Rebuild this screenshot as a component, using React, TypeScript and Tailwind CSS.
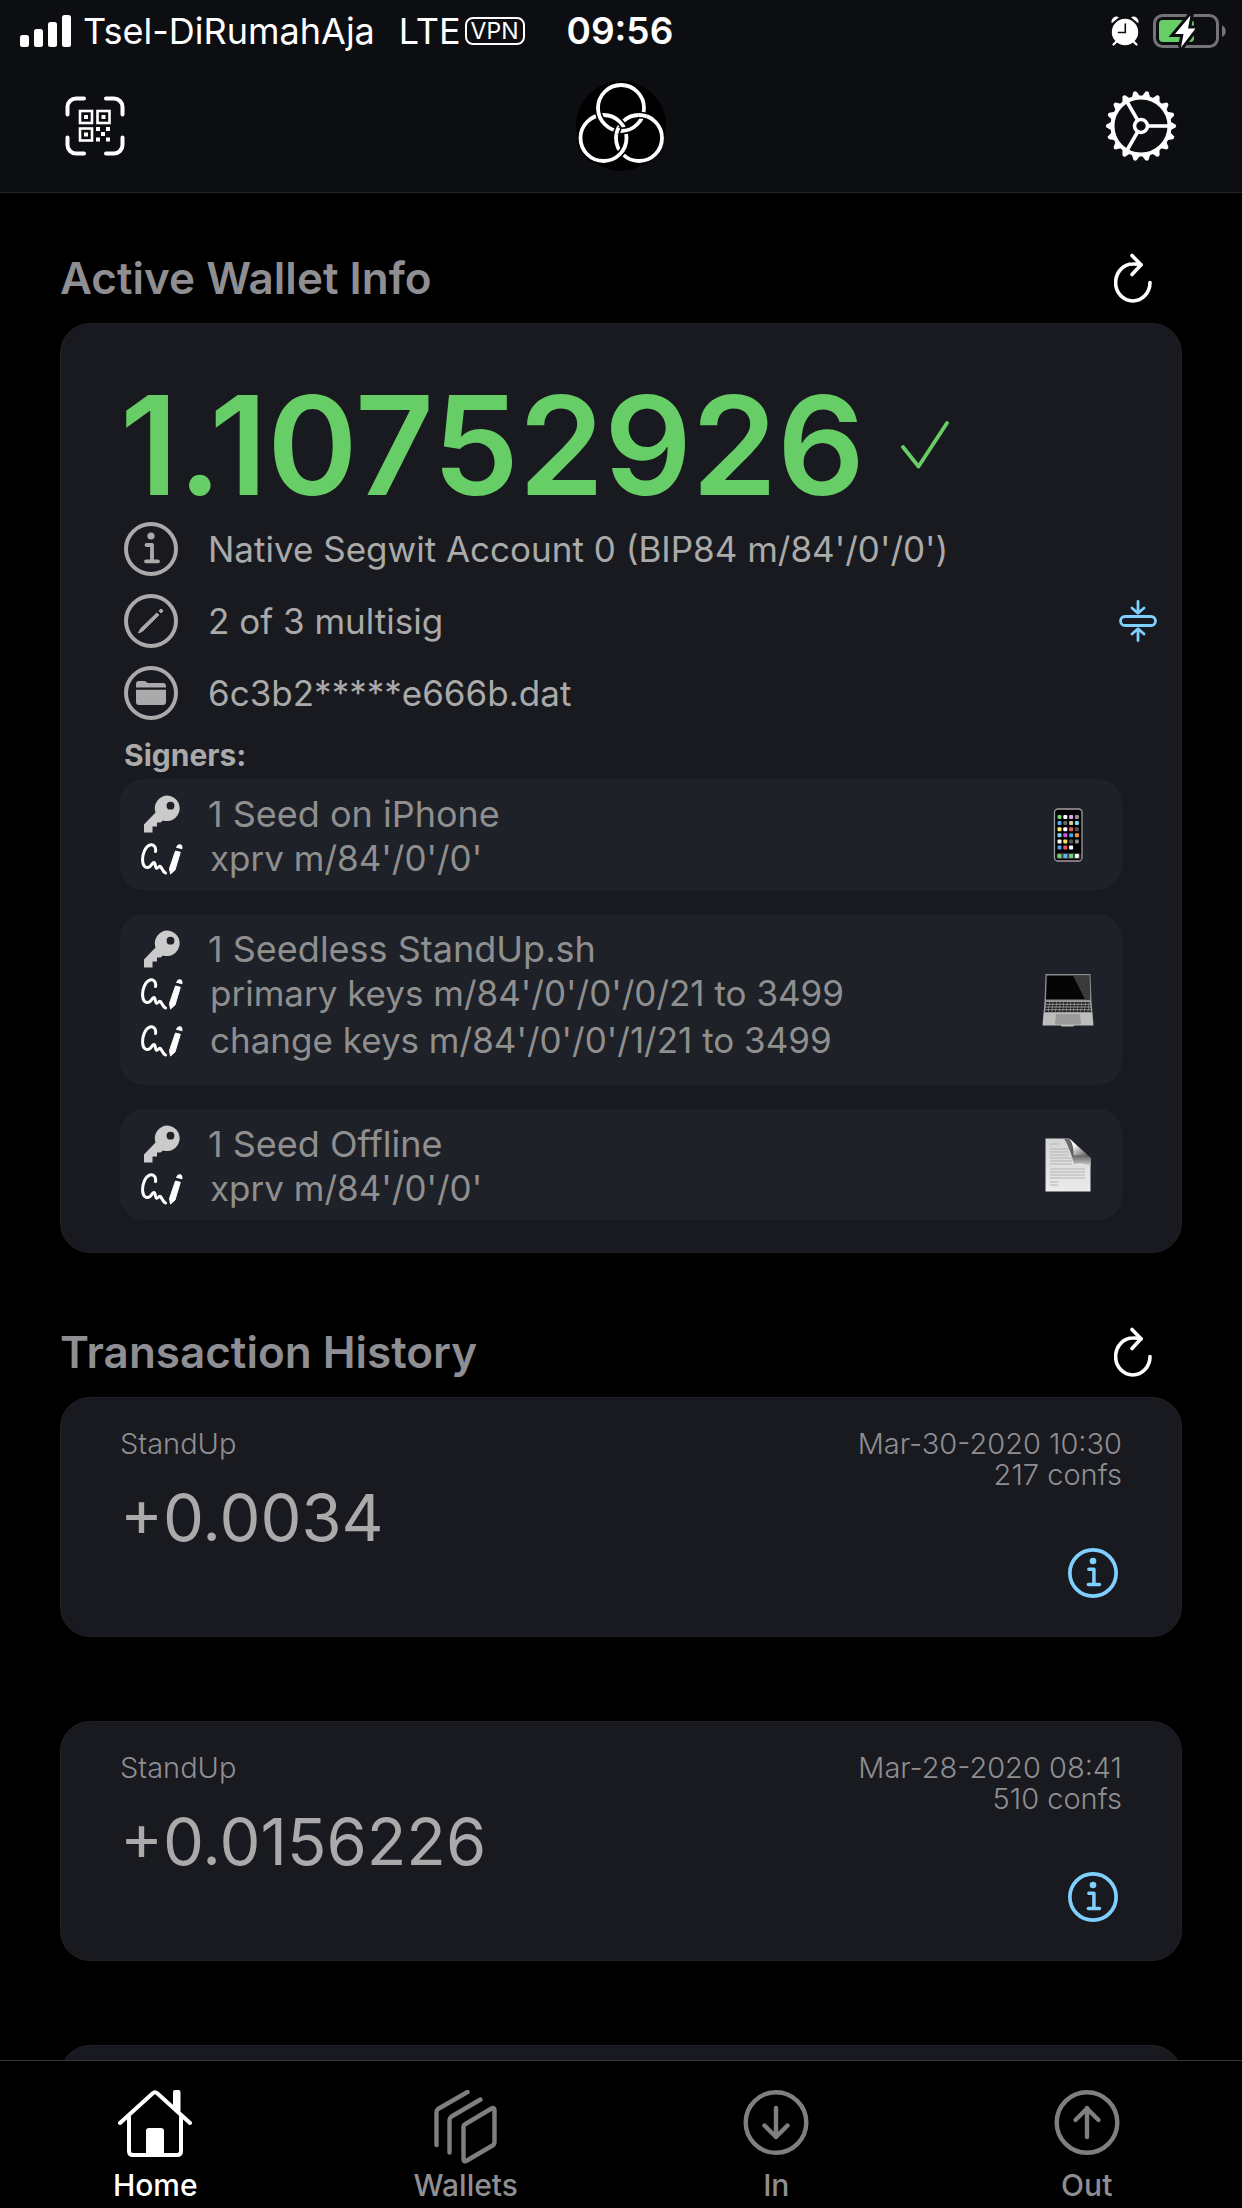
import React from "react";

type IconProps = { className?: string };

const range = (n: number) => Array.from({ length: n }, (_, i) => i);

const polar = (cx: number, cy: number, r: number, deg: number) => {
  const a = (deg * Math.PI) / 180;
  return `${(cx + r * Math.cos(a)).toFixed(2)} ${(cy + r * Math.sin(a)).toFixed(2)}`;
};

const arc = (cx: number, cy: number, r: number, from: number, to: number) =>
  `M${polar(cx, cy, r, from)}A${r} ${r} 0 0 1 ${polar(cx, cy, r, to)}`;

function SignalIcon() {
  return (
    <svg className="h-8 w-[51px]" viewBox="0 0 51 32" fill="#fff" aria-hidden="true">
      <rect x="0" y="20" width="9" height="12" rx="2.5" />
      <rect x="14" y="14" width="9" height="18" rx="2.5" />
      <rect x="28" y="7" width="9" height="25" rx="2.5" />
      <rect x="42" y="0" width="9" height="32" rx="2.5" />
    </svg>
  );
}

function AlarmIcon() {
  return (
    <svg className="h-[30px] w-7" viewBox="0 0 28 30" aria-hidden="true">
      <g fill="#fff">
        <circle cx="14" cy="16" r="13.2" />
        <path d="M0.8 7.2A5 5 0 0 1 8 1.2Z" />
        <path d="M27.2 7.2A5 5 0 0 0 20 1.2Z" />
      </g>
      <path d="M5 26L2.5 28.5M23 26l2.500 2.500" stroke="#fff" strokeWidth="2.200" strokeLinecap="round" />
      <path d="M14.300 8v8.500H7.500" fill="none" stroke="#0d0e12" strokeWidth="1.600" strokeLinecap="round" />
    </svg>
  );
}

function BatteryIcon() {
  return (
    <svg className="h-9 w-[74px]" viewBox="0 0 74 36" aria-hidden="true">
      <rect x="1.500" y="2.500" width="63" height="31" rx="8" fill="none" stroke="#747478" strokeWidth="3" />
      <path d="M69 12.500c5 2 5 9.500 0 11.500Z" fill="#747478" />
      <rect x="6" y="7" width="35" height="22" rx="4" fill="#67ce67" />
      <path d="M37.500 2.500L22 21h8.500L28 34.500 42.500 15.500H35Z" fill="#fff" stroke="#0d0e12" strokeWidth="6" />
      <path d="M37.500 2.500L22 21h8.500L28 34.500 42.500 15.500H35Z" fill="#fff" />
    </svg>
  );
}

function QrScanIcon() {
  return (
    <svg className="h-[60px] w-[60px]" viewBox="0 0 60 60" fill="none" aria-hidden="true">
      <path
        d="M2.500 18.500V11a8.500 8.500 0 0 1 8.500-8.500h8M41 2.500h8A8.500 8.500 0 0 1 57.500 11v7.500M57.500 41.500V49a8.500 8.500 0 0 1-8.500 8.500h-8M19 57.500h-8A8.500 8.500 0 0 1 2.500 49v-7.500"
        stroke="#fff"
        strokeWidth="4"
        strokeLinecap="round"
      />
      <g stroke="#fff" strokeWidth="2.600">
        <rect x="15" y="15" width="12" height="12" />
        <rect x="32.500" y="15" width="12" height="12" />
        <rect x="15" y="32.500" width="12" height="12" />
      </g>
      <g fill="#fff">
        <rect x="19" y="19" width="4" height="4" />
        <rect x="36.500" y="19" width="4" height="4" />
        <rect x="19" y="36.500" width="4" height="4" />
        <rect x="31" y="31" width="4" height="4" />
        <rect x="41" y="31" width="4" height="4" />
        <rect x="36" y="36" width="4" height="4" />
        <rect x="31" y="41.500" width="4" height="4" />
        <rect x="41" y="41.500" width="4" height="4" />
      </g>
    </svg>
  );
}

function RingsLogo() {
  const weave = [arc(63, 57, 23, 190, 207), arc(63, 57, 23, -92, -70)];
  return (
    <svg className="h-[90px] w-[90px]" viewBox="0 0 90 90" fill="none" role="img" aria-label="Logo">
      <circle cx="45" cy="45" r="45" fill="#000" />
      <circle cx="63" cy="57" r="23" stroke="#fff" strokeWidth="3.800" />
      <circle cx="27.500" cy="57" r="23" stroke="#000" strokeWidth="7" />
      <circle cx="27.500" cy="57" r="23" stroke="#fff" strokeWidth="3.800" />
      <circle cx="45" cy="27" r="23" stroke="#000" strokeWidth="7" />
      <circle cx="45" cy="27" r="23" stroke="#fff" strokeWidth="3.800" />
      {weave.map((d) => (
        <g key={d}>
          <path d={d} stroke="#000" strokeWidth="7" />
          <path d={d} stroke="#fff" strokeWidth="3.800" />
        </g>
      ))}
    </svg>
  );
}

function GearIcon() {
  return (
    <svg className="h-[72px] w-[72px]" viewBox="-36 -36 72 72" fill="none" stroke="#fff" aria-hidden="true">
      <circle r="28.500" strokeWidth="4" />
      <circle r="6.500" strokeWidth="3.600" />
      {range(3).map((i) => (
        <path key={i} d="M7 0H28" strokeWidth="3.600" transform={`rotate(${i * 120})`} />
      ))}
      {range(18).map((i) => (
        <path
          key={i}
          d="M29 -4.500L34.500 -1.600Q36 0 34.500 1.600L29 4.500Z"
          fill="#fff"
          stroke="none"
          transform={`rotate(${i * 20})`}
        />
      ))}
    </svg>
  );
}

function RefreshIcon() {
  return (
    <svg
      className="h-[50px] w-[38px]"
      viewBox="0 0 38 50"
      fill="none"
      stroke="#fff"
      strokeWidth="3.600"
      strokeLinecap="round"
      strokeLinejoin="round"
      aria-hidden="true"
    >
      <path d="M36 29.500A17.200 18.500 0 1 1 18.800 11Q23 10.700 27 12" />
      <path d="M18 2.500L27 11.700 18 21.500" />
    </svg>
  );
}

function CheckIcon() {
  return (
    <svg className="h-12 w-12" viewBox="0 0 48 48" fill="none" aria-hidden="true">
      <path
        d="M2 26L17.500 45.500 46 2"
        stroke="#67ce67"
        strokeWidth="3.800"
        strokeLinecap="round"
        strokeLinejoin="round"
      />
    </svg>
  );
}

function InfoIcon({ className }: IconProps) {
  return (
    <svg className={className} viewBox="0 0 54 54" fill="none" stroke="currentColor" aria-hidden="true">
      <circle cx="27" cy="27" r="25" strokeWidth="4" />
      <circle cx="27" cy="14" r="3.600" fill="currentColor" stroke="none" />
      <path d="M22.500 23H28V39M22 39.300H34" strokeWidth="3.800" strokeLinecap="round" strokeLinejoin="round" />
    </svg>
  );
}

function PencilCircleIcon({ className }: IconProps) {
  return (
    <svg className={className} viewBox="0 0 54 54" fill="none" stroke="currentColor" aria-hidden="true">
      <circle cx="27" cy="27" r="25" strokeWidth="4" />
      <path d="M14.500 39L16.500 34.800 32.800 19 34.800 21 18.800 37Z" fill="currentColor" strokeWidth="1" strokeLinejoin="round" />
      <path d="M35 16.800L36.500 15.300Q38.200 14.800 39 17L37 19Z" fill="currentColor" strokeWidth="1" strokeLinejoin="round" />
    </svg>
  );
}

function FolderCircleIcon({ className }: IconProps) {
  return (
    <svg className={className} viewBox="0 0 54 54" fill="none" aria-hidden="true">
      <circle cx="27" cy="27" r="25" stroke="currentColor" strokeWidth="4" />
      <path d="M12 21.500V18q0-3 3-3h5q1.500 0 2.500 1l1 1H39q3 0 3 3v1.500Z" fill="currentColor" />
      <path d="M12 23.800H42V36q0 3-3 3H15q-3 0-3-3Z" fill="currentColor" />
    </svg>
  );
}

function CollapseIcon() {
  return (
    <svg
      className="h-[42px] w-[38px]"
      viewBox="0 0 38 42"
      fill="none"
      stroke="#7fcfff"
      strokeWidth="2.800"
      strokeLinecap="round"
      strokeLinejoin="round"
      aria-hidden="true"
    >
      <rect x="1.500" y="16.500" width="35" height="9" rx="4.500" />
      <path d="M19 1.500V13M13 8L19 13.200 25 8M19 40.500V29M13 34L19 28.800 25 34" />
    </svg>
  );
}

function KeyIcon() {
  return (
    <svg className="h-[38px] w-[38px]" viewBox="0 0 38 38" aria-hidden="true">
      <path
        fillRule="evenodd"
        fill="#cbcbcb"
        d="M24.500 0.500A12.800 12.800 0 1 1 20 25.500L17.500 27.500H14V31.500H9.500V37.500H1V29.500L12.500 17.500A12.800 12.800 0 0 1 24.500 0.500ZM27.500 6.800A3.900 3.900 0 1 0 27.500 14.600 3.900 3.900 0 1 0 27.500 6.800Z"
      />
    </svg>
  );
}

function SignatureIcon() {
  return (
    <svg className="h-8 w-[42px]" viewBox="0 0 42 32" fill="none" aria-hidden="true">
      <path
        d="M14.500 8.500C15.500 4 12.500 1 9 2 4 3.500 1 12 1.700 18.500 2.300 24.500 6 25.500 9 23.500 11 22 11.500 19.500 13 19.500 14.800 19.700 13.800 24.500 15.500 25.300 17 25.800 18 22.500 19.500 23.500 21 25 21.500 28.500 24.500 30"
        stroke="#fff"
        strokeWidth="3"
        strokeLinecap="round"
      />
      <path d="M34.500 8L39.300 9.300 34 27 29.500 31 28.500 25.500Z" fill="#fff" stroke="#fff" strokeLinejoin="round" />
      <path d="M35.500 3.500Q37 0.500 39.500 1.300 42 2.300 41.300 6.300L35 4.800Z" fill="#fff" />
    </svg>
  );
}

const appColors = [
  "#72d572", "#ffffff", "#dba7e8", "#969696",
  "#4fa8f0", "#666666", "#d8cda0", "#7fe0f5",
  "#fbe96b", "#ffffff", "#e8604f", "#555555",
  "#74d8ee", "#c65ad8", "#3ea2ec", "#f09a2c",
  "#ffffff", "#fbe45a", "#555555", "#8b8b8b",
  "#4aa5ee", "#e05a50", "#ffffff",
];

function PhoneIcon() {
  return (
    <svg className="h-[54px] w-[52px]" viewBox="0 0 52 54" aria-hidden="true">
      <rect x="12.500" y="1" width="27.500" height="52" rx="3.500" fill="#000" stroke="#a39c9d" strokeWidth="1.300" />
      {appColors.map((c, i) => (
        <rect key={i} x={15.5 + (i % 4) * 5.8} y={7 + Math.floor(i / 4) * 6.1} width="4" height="4" rx="1" fill={c} />
      ))}
      <rect x="14.500" y="45" width="24" height="6" rx="1.500" fill="#3d3d40" />
      {["#72d572", "#5db7f5", "#72d572", "#ffffff"].map((c, i) => (
        <rect key={i} x={15.5 + i * 5.8} y="46" width="4" height="4" rx="1" fill={c} />
      ))}
    </svg>
  );
}

function LaptopIcon() {
  return (
    <svg className="h-[54px] w-[52px]" viewBox="0 0 52 54" aria-hidden="true">
      <path d="M3.500 1H48.500L49.500 28H2.500Z" fill="#8d8d8d" />
      <path d="M4.800 2.500H47.200L48 26.500H4Z" fill="#050505" />
      <path d="M31 2.500H47.200L48 26.500H43Z" fill="#3a3a3a" />
      <path d="M2.500 28H49.500L50.500 40H1.500Z" fill="#9b9b9b" />
      {range(4).map((i) => (
        <path key={i} d={`M${4 - i * 0.3} ${29.8 + i * 2.8}H${48 + i * 0.3}`} stroke="#1d1d1d" strokeWidth="1.800" strokeDasharray="3 0.600" />
      ))}
      <path d="M1.500 40H50.500L51.500 52.500H33L31 53.500H20L18.500 52.500H0.500Z" fill="#bdbdbd" />
      <path d="M14 41H38L39 51.500H13Z" fill="#9a9a9a" />
    </svg>
  );
}

function DocumentIcon() {
  return (
    <svg className="h-[54px] w-[52px]" viewBox="0 0 52 54" aria-hidden="true">
      <defs>
        <linearGradient id="sheet" x1="0" y1="0" x2="0" y2="1">
          <stop offset="0" stopColor="#d4d4d4" />
          <stop offset="1" stopColor="#ebebeb" />
        </linearGradient>
        <linearGradient id="fold" x1="0" y1="0" x2="0.800" y2="0.900">
          <stop offset="0.300" stopColor="#ffffff" />
          <stop offset="1" stopColor="#5d5d5d" />
        </linearGradient>
        <linearGradient id="shade" x1="0" y1="0" x2="0" y2="1">
          <stop offset="0" stopColor="#6f6f6f" />
          <stop offset="0.600" stopColor="#5f5f5f" />
          <stop offset="1" stopColor="#d0d0d0" />
        </linearGradient>
      </defs>
      <path d="M3.500 0.500H27L48.500 20V53.500H3.500Z" fill="url(#sheet)" />
      {[6, 11, 14, 17, 20, 23, 26, 31, 34, 37, 40, 44, 47].map((y) => (
        <path
          key={y}
          d={`M8 ${y}H${y === 6 || y > 42 ? 16 : y < 20 ? 27 : y < 30 ? 30 : 43}`}
          stroke="#b3b3b3"
          strokeWidth="1"
        />
      ))}
      <path d="M22 0.500H27L48.500 20V28Q42 24 32 26 28 10 22 0.500Z" fill="url(#shade)" />
      <path d="M27.500 0.500Q32 7 31.500 17.500 43 16.500 48.500 20Z" fill="url(#fold)" />
    </svg>
  );
}

function HomeIcon() {
  return (
    <svg
      className="h-[74px] w-[74px]"
      viewBox="0 0 74 74"
      fill="none"
      stroke="#fff"
      strokeWidth="4"
      strokeLinecap="round"
      strokeLinejoin="round"
      aria-hidden="true"
    >
      <path d="M2 33L34.500 3.500Q37 1 39.500 3.500L72 33" />
      <path d="M11 27V61Q11 65 15 65H59Q63 65 63 61V27" />
      <path d="M57 2V17L60.500 21V2Z" />
      <path d="M30 65V41Q30 40 31 40H43Q44 40 44 41V65Z" fill="#fff" />
    </svg>
  );
}

function WalletsIcon() {
  return (
    <svg
      className="h-[74px] w-[66px]"
      viewBox="0 0 66 74"
      fill="none"
      stroke="#7f7f7f"
      strokeWidth="4.400"
      strokeLinecap="round"
      strokeLinejoin="round"
      aria-hidden="true"
    >
      <path d="M34.500 2L5 19Q3.500 20 3.500 22V55" />
      <path d="M47.500 9.500L18.500 26.500Q16.500 28 16.500 30V62.500" />
      <path d="M30.500 37Q30.500 35 32.500 34L58.500 18.500Q61.500 17 61.500 20V52Q61.500 54.500 59.500 55.500L34 70.500Q30.500 72.500 30.500 69Z" />
    </svg>
  );
}

function ArrowCircleIcon({ up }: { up: boolean }) {
  return (
    <svg
      className="h-[74px] w-[66px]"
      viewBox="0 0 66 74"
      fill="none"
      stroke="#7f7f7f"
      strokeWidth="4.400"
      strokeLinecap="round"
      strokeLinejoin="round"
      aria-hidden="true"
    >
      <circle cx="33" cy="32.500" r="30.300" />
      <path d={up ? "M33 47V18M21.500 30L33 18.500 44.500 30" : "M33 18V47M21.500 35.500L33 47 44.500 35.500"} />
    </svg>
  );
}

function SectionHeader({ title }: { title: string }) {
  return (
    <div className="flex h-[90px] items-center justify-between pr-[30px]">
      <h2 className="text-[44px] font-semibold text-[#8e8e93]">{title}</h2>
      <button type="button" aria-label={`Refresh ${title}`}>
        <RefreshIcon />
      </button>
    </div>
  );
}

type Signer = { title: string; keys: string[]; device: React.ReactNode };

const signers: Signer[] = [
  { title: "1 Seed on iPhone", keys: ["xprv m/84'/0'/0'"], device: <PhoneIcon /> },
  {
    title: "1 Seedless StandUp.sh",
    keys: ["primary keys m/84'/0'/0'/0/21 to 3499", "change keys m/84'/0'/0'/1/21 to 3499"],
    device: <LaptopIcon />,
  },
  { title: "1 Seed Offline", keys: ["xprv m/84'/0'/0'"], device: <DocumentIcon /> },
];

function SignerCard({ signer }: { signer: Signer }) {
  const tall = signer.keys.length > 1;
  return (
    <li
      className={`flex items-center justify-between rounded-3xl bg-[#1f2128] pr-7 pl-5 text-[#8f8f8f] ${
        tall ? "min-h-[171px]" : "min-h-[111px]"
      }`}
    >
      <div className="self-start pt-3">
        <div className="flex h-[45px] items-center gap-6 text-[36px]">
          <span className="flex w-11 justify-center">
            <KeyIcon />
          </span>
          <h3>{signer.title}</h3>
        </div>
        <div className="flex flex-col gap-0.5 text-[35px]">
          {signer.keys.map((key) => (
            <div key={key} className="flex h-[45px] items-center gap-[26px]">
              <span className="flex w-11 justify-center">
                <SignatureIcon />
              </span>
              <p>{key}</p>
            </div>
          ))}
        </div>
      </div>
      {signer.device}
    </li>
  );
}

type Transaction = { label: string; amount: string; date: string; confs: string };

const transactions: Transaction[] = [
  { label: "StandUp", amount: "+0.0034", date: "Mar-30-2020 10:30", confs: "217 confs" },
  { label: "StandUp", amount: "+0.0156226", date: "Mar-28-2020 08:41", confs: "510 confs" },
];

function TransactionCard({ tx }: { tx: Transaction }) {
  return (
    <li className="flex min-h-[240px] justify-between rounded-[30px] border border-[#1f2126] bg-[#191a1f] px-[59px] pt-[30px]">
      <div>
        <p className="text-[29px] leading-8 font-light text-[#8e8e93]">{tx.label}</p>
        <p className="mt-[18px] text-[65px] leading-[80px] text-[#aaaaaa]">{tx.amount}</p>
      </div>
      <div className="flex flex-col items-end text-right text-[29px] leading-[31px] font-light text-[#8e8e93]">
        <p>{tx.date}</p>
        <p>{tx.confs}</p>
        <button type="button" aria-label="Transaction details" className="mt-[58px] mr-1 text-[#7fcfff]">
          <InfoIcon className="h-[50px] w-[50px]" />
        </button>
      </div>
    </li>
  );
}

const tabs = [
  { name: "Home", icon: <HomeIcon />, active: true },
  { name: "Wallets", icon: <WalletsIcon />, active: false },
  { name: "In", icon: <ArrowCircleIcon up={false} />, active: false },
  { name: "Out", icon: <ArrowCircleIcon up />, active: false },
];

export default function App() {
  return (
    <div className="flex h-screen flex-col bg-black font-['Inter','Liberation_Sans',sans-serif] text-white">
      <header className="shrink-0 border-b border-[#242427] bg-[#0d0e12]">
        <div className="flex h-[62px] items-center justify-between pr-[15px] pl-5">
          <div className="flex items-center text-[36px]">
            <SignalIcon />
            <span className="ml-3">Tsel-DiRumahAja</span>
            <span className="ml-6">LTE</span>
            <span className="ml-1 rounded-lg border-2 border-white px-1 text-[23px] leading-6">VPN</span>
            <time className="ml-[42px] text-[37px] font-semibold">09:56</time>
          </div>
          <div className="flex items-center gap-3.5">
            <AlarmIcon />
            <BatteryIcon />
          </div>
        </div>
        <div className="grid h-[130px] grid-cols-3 items-center px-[65px] pb-0.5">
          <button type="button" aria-label="Scan QR code" className="justify-self-start">
            <QrScanIcon />
          </button>
          <div className="justify-self-center">
            <RingsLogo />
          </div>
          <button type="button" aria-label="Settings" className="justify-self-end">
            <GearIcon />
          </button>
        </div>
      </header>

      <main className="min-h-0 flex-1 overflow-y-auto px-[60px] pt-10 [scrollbar-width:none]">
        <section>
          <SectionHeader title="Active Wallet Info" />
          <div className="rounded-[30px] border border-[#1f2126] bg-[#191a1f] pt-[53px] pb-8 pl-[59px]">
            <div className="flex h-[136px] items-center gap-9 text-[#67ce67]">
              <p className="text-[137px] leading-none font-semibold">1.10752926</p>
              <CheckIcon />
            </div>
            <div className="pl-1 text-[35px] text-[#aaaaaa]">
              <div className="flex h-[72px] items-center gap-[30px]">
                <InfoIcon className="h-[54px] w-[54px]" />
                <p>Native Segwit Account 0 (BIP84 m/84'/0'/0')</p>
              </div>
              <div className="flex h-[72px] items-center justify-between pr-6">
                <div className="flex items-center gap-[30px]">
                  <PencilCircleIcon className="h-[54px] w-[54px]" />
                  <p>2 of 3 multisig</p>
                </div>
                <button type="button" aria-label="Collapse wallet info">
                  <CollapseIcon />
                </button>
              </div>
              <div className="flex h-[72px] items-center gap-[30px]">
                <FolderCircleIcon className="h-[54px] w-[54px]" />
                <p>6c3b2*****e666b.dat</p>
              </div>
              <h3 className="pt-0.5 text-[30px] leading-[48px] font-bold">Signers:</h3>
            </div>
            <ul className="flex flex-col gap-6 pr-[59px]">
              {signers.map((signer) => (
                <SignerCard key={signer.title} signer={signer} />
              ))}
            </ul>
          </div>
        </section>

        <section className="mt-[54px]">
          <SectionHeader title="Transaction History" />
          <ul className="flex flex-col gap-[84px]">
            {transactions.map((tx) => (
              <TransactionCard key={tx.date} tx={tx} />
            ))}
            <li className="min-h-[240px] rounded-[30px] border border-[#1f2126] bg-[#191a1f]" />
          </ul>
        </section>
      </main>

      <nav className="grid shrink-0 grid-cols-4 border-t border-[#38383b] bg-black">
        {tabs.map((tab) => (
          <button
            key={tab.name}
            type="button"
            className={`flex flex-col items-center pt-[29px] pb-0.5 text-[30px] leading-[42px] font-medium ${
              tab.active ? "text-white" : "text-[#8e8e93]"
            }`}
          >
            {tab.icon}
            {tab.name}
          </button>
        ))}
      </nav>
    </div>
  );
}
